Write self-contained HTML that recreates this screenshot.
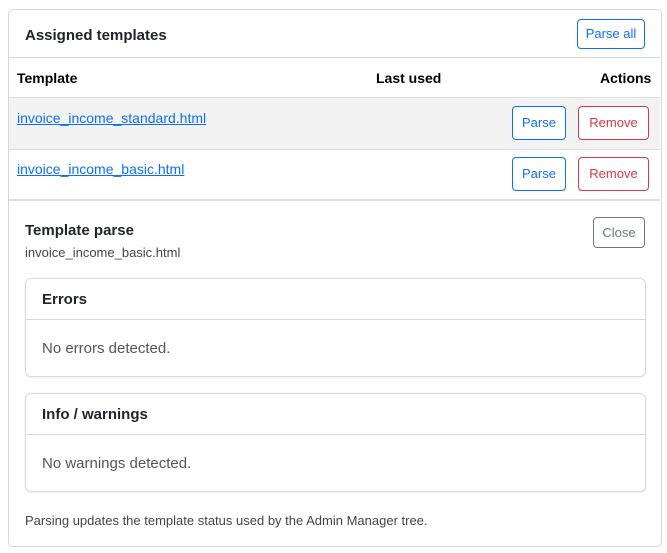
<!DOCTYPE html>
<html><head><style>
body{margin:0;background:#fff;font-family:"Liberation Sans",sans-serif;color:#212529;width:667px;height:553px;overflow:hidden;position:relative}
.a{position:absolute}
.btn{position:absolute;box-sizing:border-box;border:1px solid;border-radius:4px;font-size:13px;text-align:center;background:#fff}
.b{border-color:#0d6efd;color:#0d6efd}
.r{border-color:#dc3545;color:#dc3545}
.g{border-color:#6c757d;color:#6c757d}
a{color:#0d6efd;text-decoration:underline;font-size:14px}
.box{position:absolute;left:25px;width:619px;border:1px solid #d9d9d9;border-radius:6px;box-shadow:0 1px 2px rgba(0,0,0,.08)}
.box .h{height:40px;border-bottom:1px solid #d9d9d9;font-size:15px;font-weight:bold;line-height:42px;padding-left:16px}
.box .c{height:56px;line-height:58px;padding-left:16px;font-size:15px;color:#555}
</style></head><body>
<div class="a" style="left:8px;top:9px;width:652px;height:536px;border:1px solid #d6d6d6;border-radius:5px"></div>
<div class="a" style="left:25px;top:26px;font-size:15px;font-weight:bold;line-height:20px">Assigned templates</div>
<div class="btn b" style="left:577px;top:19px;width:68px;height:30px;line-height:28px">Parse all</div>
<div class="a" style="left:9px;top:57px;width:651px;border-top:1px solid #d6d6d6"></div>
<div class="a" style="left:17px;top:70px;font-size:14px;font-weight:bold;color:#000">Template</div>
<div class="a" style="left:376px;top:70px;font-size:14px;font-weight:bold;color:#000">Last used</div>
<div class="a" style="left:600px;top:70px;font-size:14px;font-weight:bold;color:#000">Actions</div>
<div class="a" style="left:9px;top:97px;width:651px;height:51px;background:#f2f2f2;border-top:1px solid #dedede;border-bottom:1px solid #dedede"></div>
<a class="a" style="left:17px;top:110px">invoice_income_standard.html</a>
<div class="btn b" style="left:512px;top:106px;width:54px;height:34px;line-height:32px">Parse</div>
<div class="btn r" style="left:578px;top:106px;width:71px;height:34px;line-height:32px">Remove</div>
<a class="a" style="left:17px;top:161px">invoice_income_basic.html</a>
<div class="btn b" style="left:512px;top:157px;width:54px;height:34px;line-height:32px">Parse</div>
<div class="btn r" style="left:578px;top:157px;width:71px;height:34px;line-height:32px">Remove</div>
<div class="a" style="left:9px;top:199px;width:651px;border-top:2px solid #dcdcdc"></div>
<div class="a" style="left:25px;top:222px;font-size:15px;font-weight:bold">Template parse</div>
<div class="a" style="left:25px;top:245px;font-size:13px;color:#444">invoice_income_basic.html</div>
<div class="btn g" style="left:593px;top:217px;width:52px;height:31px;line-height:29px">Close</div>
<div class="box" style="top:278px"><div class="h">Errors</div><div class="c">No errors detected.</div></div>
<div class="box" style="top:393px"><div class="h">Info / warnings</div><div class="c">No warnings detected.</div></div>
<div class="a" style="left:25px;top:513px;font-size:13px;color:#444">Parsing updates the template status used by the Admin Manager tree.</div>
</body></html>
